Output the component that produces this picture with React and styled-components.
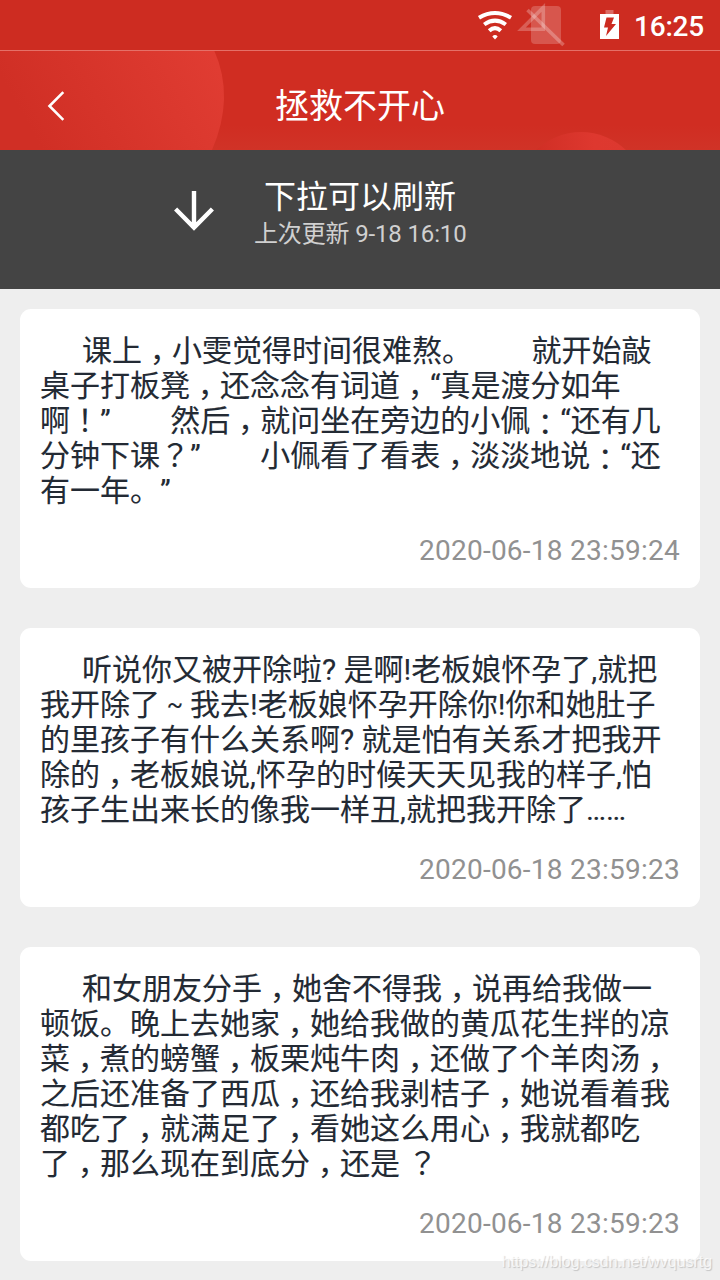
import React from 'react';
import styled, { createGlobalStyle } from 'styled-components';

const jokes = [
    {
        date: '2020-06-18 23:59:24',
        lines: [
            '课上，小雯觉得时间很难熬。        就开始敲',
            '桌子打板凳，还念念有词道，“真是渡分如年',
            '啊！”        然后，就问坐在旁边的小佩：“还有几',
            '分钟下课？”        小佩看了看表，淡淡地说：“还',
            '有一年。”',
        ],
    },
    {
        date: '2020-06-18 23:59:23',
        lines: [
            '听说你又被开除啦? 是啊!老板娘怀孕了,就把',
            '我开除了～我去!老板娘怀孕开除你!你和她肚子',
            '的里孩子有什么关系啊? 就是怕有关系才把我开',
            '除的，老板娘说,怀孕的时候天天见我的样子,怕',
            '孩子生出来长的像我一样丑,就把我开除了……',
        ],
    },
    {
        date: '2020-06-18 23:59:23',
        lines: [
            '和女朋友分手，她舍不得我，说再给我做一',
            '顿饭。晚上去她家，她给我做的黄瓜花生拌的凉',
            '菜，煮的螃蟹，板栗炖牛肉，还做了个羊肉汤，',
            '之后还准备了西瓜，还给我剥桔子，她说看着我',
            '都吃了，就满足了，看她这么用心，我就都吃',
            '了，那么现在到底分，还是 ？',
        ],
    },
];

const drop = { '，': '-9px', '：': '-4px' };

// full width marks sit in the middle of their cell
const renderLine = (line) =>
    line.split(/([，！？：～])/).map((part, i) => {
        if (part === '～') return <Tilde key={i}>~</Tilde>;
        return i % 2 ? <Mark key={i} lang="zh-TW" $drop={drop[part]}>{part}</Mark> : part;
    });

const StatusIcons = () => (
    <svg width="150" height="50" viewBox="474 0 150 50" fill="none">
        <g stroke="#fff" strokeWidth="4">
            <path d="M479 17.7 Q495 8.3 511 17.7" />
            <path d="M484.2 24.5 Q495 16.7 505.8 24.5" />
            <path d="M489.2 30.8 Q495 25.4 500.8 30.8" />
        </g>
        <path d="M492.3 36.4 Q495 33.6 497.7 36.4 L495 39.5 Z" fill="#fff" />
        <rect x="531" y="6" width="30" height="38" rx="4" fill="#fff" fillOpacity=".2" />
        <path d="M521.5 29.2 H543.3 V7.4 Z" stroke="#fff" strokeOpacity=".24" strokeWidth="3.6" />
        <path d="M527.5 10 L563.5 45" stroke="#fff" strokeOpacity=".26" strokeWidth="3.6" />
        <rect x="605.5" y="10" width="8" height="4" fill="#fff" fillOpacity=".3" />
        <path d="M600 14 H619 V39 H600 Z" fill="#fff" />
        <path d="M606.5 17.5 H614 L611.5 24 H616 L606 36 L608 27.5 H604 Z" fill="#cc2b20" />
    </svg>
);

const App = () => {
    return (
        <Screen>
            <GlobalStyle />
            <StatusBar>
                <StatusIcons />
                <Clock>16:25</Clock>
            </StatusBar>
            <Header>
                <Backdrop width="720" height="100" viewBox="0 50 720 100">
                    <defs>
                        <linearGradient id="disc" x1="0" y1=".25" x2="1" y2="0">
                            <stop offset="0" stopColor="#d02f25" />
                            <stop offset="1" stopColor="#e13d33" />
                        </linearGradient>
                        <linearGradient id="dome">
                            <stop offset=".15" stopColor="#d02f25" />
                            <stop offset=".6" stopColor="#de382f" />
                            <stop offset="1" stopColor="#dc3930" />
                        </linearGradient>
                    </defs>
                    <path d="M0 50 H214 Q235 97 212 150 H0 Z" fill="url(#disc)" />
                    <circle cx="581" cy="197" r="65" fill="url(#dome)" />
                    <path d="M0 50.5 H720" stroke="#e57068" />
                </Backdrop>
                <Back>
                    <svg width="20" height="32" viewBox="0 0 20 32" fill="none" stroke="#fff" strokeWidth="2.6">
                        <path d="M17.3 2.2 L3.5 16 L17.3 29.8" />
                    </svg>
                </Back>
                <Title>拯救不开心</Title>
            </Header>
            <Refresh>
                <svg width="40" height="40" viewBox="0 0 40 40" fill="none" stroke="#fff" strokeWidth="4.4">
                    <path d="M20 0 V36 M1.6 18 L20 36.6 L38.4 18" />
                </svg>
                <RefreshText>
                    <RefreshTitle>下拉可以刷新</RefreshTitle>
                    <RefreshTime>上次更新 9-18 16:10</RefreshTime>
                </RefreshText>
            </Refresh>
            <List>
                {jokes.map((joke, i) => (
                    <Card key={i}>
                        <Content>
                            {joke.lines.map((line, n) => (
                                <Line key={n} $first={n === 0}>{renderLine(line)}</Line>
                            ))}
                        </Content>
                        <DateText>{joke.date}</DateText>
                    </Card>
                ))}
            </List>
            <Watermark>https://blog.csdn.net/wvqusrtg</Watermark>
        </Screen>
    )
}

export default App

// Styled Components

const GlobalStyle = createGlobalStyle`
body {
    margin: 0;
    overflow: hidden;
}
`;

const Screen = styled.div`
    position: relative;
    display: flex;
    flex-direction: column;
    width: 720px;
    height: 1280px;
    overflow: hidden;
    background: #eee;
    font-family: Roboto, "Noto Sans CJK SC", sans-serif;
    text-spacing-trim: space-all;
`;

const StatusBar = styled.div`
    display: flex;
    justify-content: flex-end;
    flex: none;
    height: 50px;
    padding-right: 16px;
    background: #cd2c21;
`;

const Clock = styled.span`
    width: 70px;
    margin-left: 10px;
    color: #fff;
    font-size: 28px;
    font-weight: 500;
    line-height: 53px;
    letter-spacing: -.2px;
    text-align: right;
    white-space: nowrap;
`;

const Header = styled.div`
    position: relative;
    display: grid;
    grid-template-columns: 112px 1fr 112px;
    align-items: center;
    flex: none;
    height: 100px;
    background: linear-gradient(#d02d22 75%, #d03327);
`;

const Backdrop = styled.svg`
    position: absolute;
    top: 0;
    left: 0;
`;

const Back = styled.div`
    position: relative;
    display: flex;
    justify-content: center;
    padding-top: 12px;
`;

const Title = styled.div`
    position: relative;
    padding-top: 12px;
    color: #fff;
    font-size: 34px;
    line-height: 40px;
    text-align: center;
`;

const Refresh = styled.div`
    display: flex;
    flex: none;
    height: 139px;
    box-sizing: border-box;
    padding: 41px 0 0 174px;
    background: #444;
`;

const RefreshText = styled.div`
    width: 212px;
    margin: -13px 0 0 40px;
    text-align: center;
    white-space: nowrap;
`;

const RefreshTitle = styled.div`
    color: #fff;
    font-size: 32px;
    line-height: 38px;
`;

const RefreshTime = styled.div`
    color: #d0d0d0;
    font-size: 24px;
    line-height: 36px;
    letter-spacing: -.15px;
`;

const List = styled.div`
    display: flex;
    flex-direction: column;
    gap: 40px;
    padding: 20px;
`;

const Card = styled.div`
    display: flex;
    flex-direction: column;
    gap: 25px;
    padding: 24px 20px 20px;
    border-radius: 11px;
    background: #fff;
`;

const Content = styled.div`
    color: #232a34;
    font-size: 30px;
    -webkit-text-stroke: .1px;
`;

const Line = styled.div`
    height: 35px;
    padding-left: ${props => props.$first ? '42px' : '0'};
    line-height: 35px;
    white-space: pre;
`;

const Mark = styled.span`
    font-family: "Noto Sans CJK TC", sans-serif;
    line-height: 0;
    vertical-align: ${props => props.$drop || 'baseline'};
`;

const Tilde = styled.span`
    display: inline-block;
    width: 30px;
    font-size: 24px;
    line-height: 24px;
    text-align: center;
    vertical-align: 2px;
`;

const DateText = styled.div`
    height: 35px;
    color: #919191;
    font-size: 28px;
    line-height: 35px;
    letter-spacing: .25px;
    text-align: right;
`;

const Watermark = styled.div`
    position: absolute;
    right: 8px;
    bottom: 8px;
    color: rgba(255, 255, 255, .75);
    font-family: "Liberation Sans", sans-serif;
    font-size: 16px;
    line-height: 20px;
    letter-spacing: -.05px;
    text-shadow: 1px 1px 1px rgba(0, 0, 0, .18);
`;
